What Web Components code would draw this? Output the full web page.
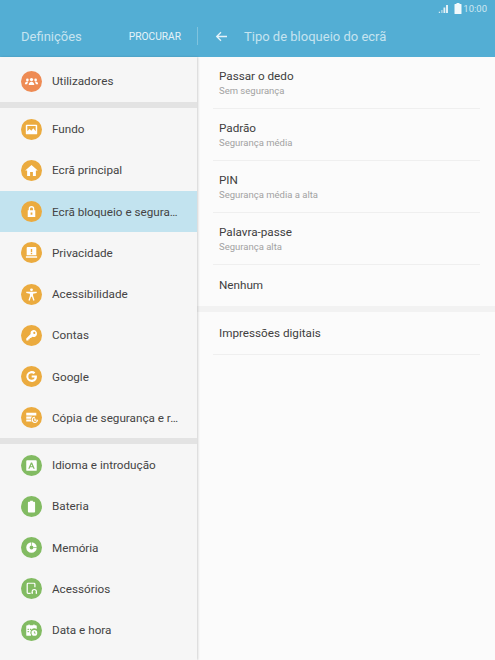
<!DOCTYPE html>
<html lang="pt">
<head>
<meta charset="utf-8">
<title>Definições</title>
<style>
  html, body { margin: 0; height: 100%; }
  body { font-family: Roboto, "Liberation Sans", sans-serif; overflow: hidden; }
</style>
</head>
<body>
<settings-app>
  <settings-header slot="header"></settings-header>
  <side-menu slot="side">
    <menu-row icon="users" tone="#ee8b54" first>Utilizadores</menu-row>
    <menu-gap></menu-gap>
    <menu-row icon="image" tone="#ebab3f">Fundo</menu-row>
    <menu-row icon="home" tone="#ebab3f">Ecrã principal</menu-row>
    <menu-row icon="lock" tone="#ebab3f" selected>Ecrã bloqueio e segura…</menu-row>
    <menu-row icon="privacy" tone="#ebab3f">Privacidade</menu-row>
    <menu-row icon="access" tone="#ebab3f">Acessibilidade</menu-row>
    <menu-row icon="key" tone="#ebab3f">Contas</menu-row>
    <menu-row icon="google" tone="#ebab3f">Google</menu-row>
    <menu-row icon="backup" tone="#ebab3f">Cópia de segurança e r…</menu-row>
    <menu-gap></menu-gap>
    <menu-row icon="lang" tone="#82bb62">Idioma e introdução</menu-row>
    <menu-row icon="battery" tone="#82bb62">Bateria</menu-row>
    <menu-row icon="memory" tone="#82bb62">Memória</menu-row>
    <menu-row icon="accessory" tone="#82bb62">Acessórios</menu-row>
    <menu-row icon="date" tone="#82bb62">Data e hora</menu-row>
  </side-menu>
  <lock-list slot="main">
    <lock-option note="Sem segurança">Passar o dedo</lock-option>
    <lock-option note="Segurança média">Padrão</lock-option>
    <lock-option note="Segurança média a alta">PIN</lock-option>
    <lock-option note="Segurança alta">Palavra-passe</lock-option>
    <lock-option plain last>Nenhum</lock-option>
    <menu-gap tone="#f2f2f2"></menu-gap>
    <lock-option plain>Impressões digitais</lock-option>
  </lock-list>
</settings-app>

<script>
const ICONS = {
  users: '<circle cx="12" cy="9.800" r="1.900"/><path d="M8.800 16c0-2.300 1.300-3.800 3.200-3.800s3.200 1.500 3.200 3.800z"/><circle cx="7.300" cy="10.200" r="1.500"/><circle cx="16.700" cy="10.200" r="1.500"/><path d="M4.400 15.200c0-1.900 1.100-3.300 2.800-3.300.4 0 .8.100 1.100.3-.8.700-1.100 1.800-1.200 3zM19.600 15.200c0-1.900-1.100-3.300-2.800-3.300-.4 0-.8.100-1.100.3.800.7 1.100 1.800 1.200 3z"/>',
  image: '<path fill-rule="evenodd" d="M6.500 6.500h11a1 1 0 0 1 1 1v9a1 1 0 0 1-1 1h-11a1 1 0 0 1-1-1v-9a1 1 0 0 1 1-1zM7.200 8v6l2.600-2.600 2 1.900 2.200-2.800 2.800 3.500V8z"/>',
  home: '<path d="M12 5.600 19.200 12H17v6.200h-3.400v-4.400h-3.200v4.400H7V12H4.800z"/>',
  lock: '<path fill-rule="evenodd" d="M8.800 10.600V9a3.200 3.200 0 0 1 6.400 0v1.600h1.100v7.600H7.700v-7.600zm1.500 0h3.400V9a1.700 1.700 0 0 0-3.400 0zM11 13v2.800h2V13z"/>',
  privacy: '<path fill-rule="evenodd" d="M7.500 5.800h9a1 1 0 0 1 1 1v8.400h-11V6.800a1 1 0 0 1 1-1zM11.200 8v3.800h1.600V8zm0 4.600v1.300h1.600v-1.300zM5.600 16.200h12.800v1.900H5.600z"/>',
  access: '<circle cx="12" cy="6.600" r="1.600"/><path d="M6 8.800h12v1.400l-4.200.9v2.300l1.700 5.300-1.400.4-1.600-4.600h-1l-1.600 4.600-1.400-.4 1.700-5.300v-2.300L6 10.200z"/>',
  key: '<path fill-rule="evenodd" d="M14.400 5.800a4 4 0 1 1-1.600 7.700l-1.300 1.300H10v1.500H8.500v1.500H6v-2.400l5-5a4 4 0 0 1 3.400-4.600zm.8 2a1.200 1.200 0 1 0 0 2.400 1.200 1.200 0 0 0 0-2.400z"/>',
  google: '<path d="M12.200 10.900h5.900c.1.400.1.800.1 1.300 0 3.600-2.400 6-6 6a6.200 6.200 0 1 1 4.200-10.800l-1.800 1.700a3.700 3.700 0 0 0-2.400-.9 3.800 3.800 0 0 0 0 7.600c2 0 3.100-1.100 3.400-2.600h-3.400z"/>',
  backup: '<path fill-rule="evenodd" d="M6 6.500h11.500v3.200H6zM6 10.800h6.600a5 5 0 0 0-1.200 2.500H6zM6 14.300h5.300c.1.900.5 1.700 1 2.400H6z"/><path fill="none" stroke="#fff" stroke-width="1.200" d="M18.900 14.600a3 3 0 1 1-3-3M15.800 12.800v2.200h1.900"/>',
  lang: '<path fill-rule="evenodd" d="M7 6h10a1 1 0 0 1 1 1v10a1 1 0 0 1-1 1H7a1 1 0 0 1-1-1V7a1 1 0 0 1 1-1zm4.300 2.600-3 7h1.500l.6-1.500h3.200l.6 1.500h1.500l-3-7zm.7 1.900 1 2.400h-2z"/>',
  battery: '<path d="M10.400 5.400h3.200v1.200h1.500a1 1 0 0 1 1 1v10.200a1 1 0 0 1-1 1H8.900a1 1 0 0 1-1-1V7.600a1 1 0 0 1 1-1h1.500z"/>',
  memory: '<path fill-rule="evenodd" d="M12 6a6 6 0 1 1 0 12 6 6 0 0 1 0-12zm0 3.800a2.200 2.200 0 1 0 0 4.400 2.200 2.200 0 0 0 0-4.400z"/><path fill="none" stroke="#82bb62" stroke-width=".8" d="M12 5.500v4.300M14 12h4.500"/>',
  accessory: '<path fill="none" stroke="#fff" stroke-width="1.400" d="M11 17.600H8.100a1 1 0 0 1-1-1V7a1 1 0 0 1 1-1h6.800a1 1 0 0 1 1 1v3.600"/><path fill="none" stroke="#fff" stroke-width="1.300" d="M12.800 17.600v-2.100a2.400 2.400 0 0 1 4.800 0v2.100"/><path d="M12.200 15.900h1.300v2.200h-1.300zM16.900 15.900h1.300v2.200h-1.300z"/>',
  date: '<path fill-rule="evenodd" d="M7 6h1.500V5h1.400v1h4.200V5h1.400v1H17a1 1 0 0 1 1 1v3.400a4.600 4.600 0 0 0-6.600 6.200L11.500 18H7a1 1 0 0 1-1-1V7a1 1 0 0 1 1-1zm.5 4v1.500H9V10zm2.700 0v1.500h1.500V10zM7.500 12.600v1.500H9v-1.500zm2.700 0v1.500h1.400v-1.500z"/><circle cx="15.300" cy="14.800" r="3.300"/><path fill="none" stroke="#82bb62" d="M15.300 13v2h1.500"/>'
};

class SettingsApp extends HTMLElement {
  constructor() {
    super();
    this.attachShadow({ mode: 'open' }).innerHTML = `
    <style>
      :host { display: grid; grid-template-columns: 197px 1fr; grid-template-rows: 57px 603px; height: 660px; background: #fbfbfb; }
      ::slotted([slot=header]) { grid-column: 1 / 3; }
    </style>
    <slot name="header"></slot>
    <slot name="side"></slot>
    <slot name="main"></slot>`;
  }
}

class SettingsHeader extends HTMLElement {
  constructor() {
    super();
    this.attachShadow({ mode: 'open' }).innerHTML = `
    <style>
      :host { display: flex; flex-direction: column; background: #53aed4; color: #fff; }
      .status { height: 17px; display: flex; justify-content: flex-end; align-items: center; gap: 3px; padding-right: 8px; font-size: 9.500px; color: #cfe8f2; }
      .status svg { display: block; }
      .bar { flex: 1; display: flex; align-items: flex-start; padding-top: 10px; }
      .left { width: 198px; box-sizing: border-box; height: 18px; padding: 0 16px 0 21px; border-right: 1px solid #7fc3de; display: flex; justify-content: space-between; align-items: center; }
      .title { font-size: 13px; color: #c6e4f0; }
      .search { font-size: 10.200px; color: #e6f3f9; }
      .right { display: flex; align-items: center; height: 18px; padding-left: 17px; }
      .right svg { margin-right: 16px; display: block; }
      .page { font-size: 13px; color: #c6e4f0; }
    </style>
    <div class="status">
      <svg width="11" height="10" viewBox="0 0 11 10"><path fill="#e2f0f6" d="M8 1h2v8H8zM5.500 3.500h1.800V9H5.500z"/><path fill="#9ccde2" d="M3 6h1.700v3H3z"/><path fill="#d5ebf4" d="M.8 7.700h1.300V9H.8z"/></svg>
      <svg width="8" height="11" viewBox="0 0 8 11" style="margin:0 -2px 0 2px"><path fill="#f2f9fc" d="M2.500 0h3v1H7a.5.5 0 0 1 .5.500v9a.5.5 0 0 1-.5.500H1a.5.5 0 0 1-.5-.500v-9A.5.5 0 0 1 1 1h1.500z"/></svg>
      <span>10:00</span>
    </div>
    <div class="bar">
      <div class="left"><span class="title">Definições</span><span class="search">PROCURAR</span></div>
      <div class="right">
        <svg width="13" height="11" viewBox="0 0 13 11"><path fill="none" stroke="#e6f3f9" stroke-width="1.300" d="M12 5.500H2M6 1.200 1.700 5.500 6 9.800"/></svg>
        <span class="page">Tipo de bloqueio do ecrã</span>
      </div>
    </div>`;
  }
}

class SideMenu extends HTMLElement {
  constructor() {
    super();
    this.attachShadow({ mode: 'open' }).innerHTML = `
    <style>
      :host { display: block; background: #f6f6f6; box-shadow: 1px 0 2px rgba(0,0,0,.16); position: relative; overflow: hidden; }
    </style>
    <slot></slot>`;
  }
}

class MenuRow extends HTMLElement {
  constructor() {
    super();
    this.attachShadow({ mode: 'open' }).innerHTML = `
    <style>
      :host { display: flex; align-items: center; box-sizing: border-box; height: 41.250px; padding: 1px 0 0 21px; color: #444; font-size: 11.700px; }
      :host([first]) { height: 45px; padding-top: 3px; }
      :host([selected]) { background: #c2e3ef; }
      .dot { flex: none; width: 21px; height: 21px; border-radius: 50%; margin-right: 10px; }
      svg { display: block; width: 21px; height: 21px; fill: #fff; }
      .label { white-space: nowrap; }
    </style>
    <span class="dot"></span>
    <span class="label"><slot></slot></span>`;
  }

  connectedCallback() {
    const dot = this.shadowRoot.querySelector('.dot');
    dot.style.background = this.getAttribute('tone');
    dot.innerHTML = `<svg viewBox="0 0 24 24">${ICONS[this.getAttribute('icon')] || ''}</svg>`;
  }
}

class MenuGap extends HTMLElement {
  constructor() {
    super();
    this.attachShadow({ mode: 'open' }).innerHTML = `
    <style>
      :host { display: block; height: 6px; background: var(--gap, #e3e3e3); }
    </style>`;
  }

  connectedCallback() {
    if (this.hasAttribute('tone')) {
      this.style.setProperty('--gap', this.getAttribute('tone'));
    }
  }
}

class LockList extends HTMLElement {
  constructor() {
    super();
    this.attachShadow({ mode: 'open' }).innerHTML = `
    <style>
      :host { display: block; background: #fbfbfb; }
    </style>
    <slot></slot>`;
  }
}

class LockOption extends HTMLElement {
  constructor() {
    super();
    this.attachShadow({ mode: 'open' }).innerHTML = `
    <style>
      :host { display: block; padding: 0 15px 0 16px; }
      .box { box-sizing: border-box; height: 52px; padding: 12px 0 0 6px; border-bottom: 1px solid #efefef; }
      :host([plain]) .box { height: 43px; padding-top: 1px; display: flex; align-items: center; }
      :host([last]) .box { border-bottom: 0; height: 41px; padding-top: 0; }
      .name { font-size: 11.700px; line-height: 15px; color: #404040; }
      .note { font-size: 9.500px; line-height: 12px; color: #a2a2a2; margin-top: 1px; }
      .note:empty { display: none; }
    </style>
    <div class="box">
      <div>
        <div class="name"><slot></slot></div>
        <div class="note"></div>
      </div>
    </div>`;
  }

  connectedCallback() {
    this.shadowRoot.querySelector('.note').textContent = this.getAttribute('note') || '';
  }
}

customElements.define('settings-app', SettingsApp);
customElements.define('settings-header', SettingsHeader);
customElements.define('side-menu', SideMenu);
customElements.define('menu-row', MenuRow);
customElements.define('menu-gap', MenuGap);
customElements.define('lock-list', LockList);
customElements.define('lock-option', LockOption);
</script>
</body>
</html>
